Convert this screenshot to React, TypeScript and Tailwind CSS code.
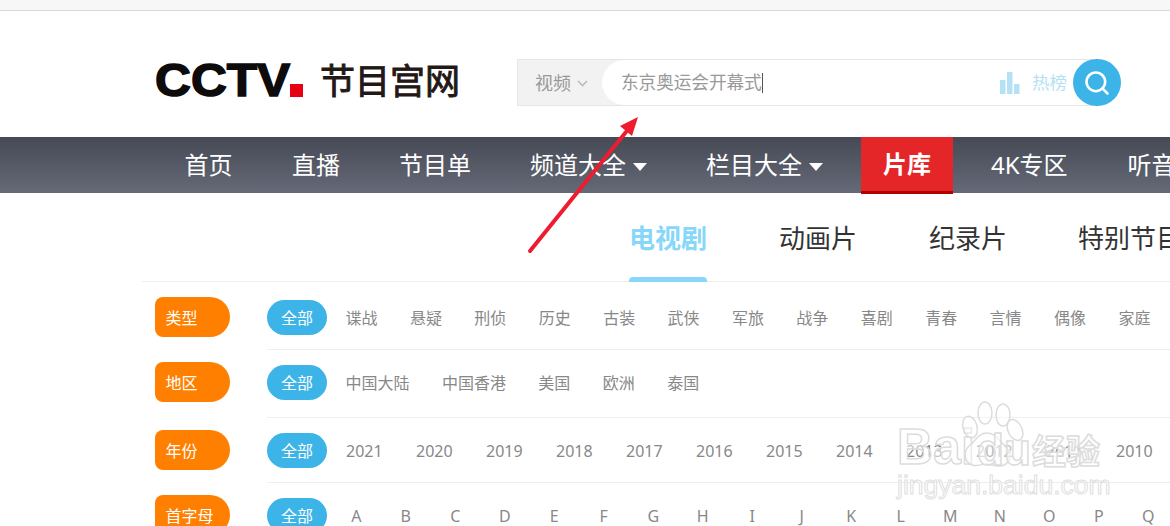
import { Search } from "lucide-react";

const navItems = [
  { name: "首页", className: "ml-[184.5px]" },
  { name: "直播", className: "ml-[59.5px]" },
  { name: "节目单", className: "ml-[59px]" },
  { name: "频道大全", className: "ml-[59px]", caret: true },
  { name: "栏目大全", className: "ml-[59px]", caret: true },
];

const rows = [
  { label: "类型", labelClass: "mt-[15px]", bodyClass: "h-[68px] pt-[18px]", listClass: "ml-[18.5px] gap-x-[32.4px]", items: ["谍战", "悬疑", "刑侦", "历史", "古装", "武侠", "军旅", "战争", "喜剧", "青春", "言情", "偶像", "家庭"] },
  { label: "地区", labelClass: "mt-[12px]", bodyClass: "h-[68px] pt-[15px]", listClass: "ml-[18.5px] gap-x-[32.4px]", items: ["中国大陆", "中国香港", "美国", "欧洲", "泰国"] },
  { label: "年份", labelClass: "mt-[12px]", bodyClass: "h-[65px] pt-[15px]", listClass: "ml-[19px] gap-x-[33.4px]", items: ["2021", "2020", "2019", "2018", "2017", "2016", "2015", "2014", "2013", "2012", "2011", "2010"] },
];

const letters = "ABCDEFGHIJKLMNOPQ".split("");

function Caret() {
  return <span className="ml-[7px] mt-[3px] h-0 w-0 border-x-[7px] border-t-[8px] border-x-transparent border-t-white" />;
}

function FilterLabel({ text, className }: { text: string; className: string }) {
  return (
    <div className={`h-10 w-[75px] shrink-0 rounded-l-lg rounded-r-[20px] bg-[#ff8000] pl-[10.5px] text-base leading-[42px] text-white ${className}`}>
      {text}
    </div>
  );
}

function AllPill() {
  return <div className="h-[35px] w-[60px] shrink-0 rounded-full bg-[#3cb4e7] text-center text-base leading-[37px] text-white">全部</div>;
}

export default function App() {
  return (
    <div className="relative h-[526px] w-[1170px] overflow-hidden bg-white font-['Noto_Sans','Noto_Sans_CJK_SC',sans-serif]">
      <div className="h-[11px] border-b border-[#d9d9d9] bg-[#f7f7f7]" />

      <header className="flex h-[126px] items-start pl-[155px] pt-[48px]">
        <div className="flex h-[47px] w-[362px] shrink-0 items-center pb-[5px]">
          <span className="inline-block w-[135px] origin-left scale-x-[1.08] font-['Liberation_Sans',sans-serif] text-[46px] font-bold leading-none text-[#0d0b0c] [-webkit-text-stroke:1.5px_#0d0b0c]">
            CCTV
          </span>
          <span className="mt-[20px] h-[13px] w-[13px] shrink-0 bg-[#e60012]" />
          <span className="ml-[17px] whitespace-nowrap text-[35px] leading-none text-[#231815] [-webkit-text-stroke:0.9px_#231815]">节目宫网</span>
        </div>

        <div className="flex h-[47px] w-[604px] items-center">
          <div className="flex h-[47px] w-[576px] shrink-0 border border-[#e6e6e6] bg-[#f2f2f2]">
            <div className="flex w-[84px] shrink-0 items-center pl-[17px] text-lg text-[#999]">
              视频
              <svg className="ml-[6px] mt-[2px]" width="11" height="7" viewBox="0 0 11 7">
                <path d="M1 1l4.5 4.5L10 1" fill="none" stroke="#bbb" strokeWidth="1.6" />
              </svg>
            </div>
            <div className="flex flex-1 items-center rounded-l-[24px] bg-white pl-[19px]">
              <span className="text-[17.7px] tracking-[-0.1px] text-[#999]">东京奥运会开幕式</span>
              <span className="h-[20px] w-px bg-[#555]" />
              <svg className="ml-auto" width="20" height="24" viewBox="0 0 20 24">
                <rect x="0" y="9" width="5.5" height="14" fill="#b5e1f6" />
                <rect x="7" y="1" width="5.5" height="22" fill="#b5e1f6" />
                <rect x="14" y="13" width="5.5" height="10" fill="#b5e1f6" />
              </svg>
              <span className="ml-[12px] mr-[25px] text-[17.5px] text-[#b5e1f6]">热榜</span>
            </div>
          </div>
          <div className="relative z-10 -ml-[20px] flex h-[47px] w-[48px] shrink-0 items-center justify-center rounded-full bg-[#3cb4e7]">
            <Search className="h-[28px] w-[28px] text-white" strokeWidth={2.2} />
          </div>
        </div>
      </header>

      <nav className="flex h-[56px] items-center whitespace-nowrap bg-gradient-to-b from-[#454a55] to-[#666a78] text-2xl text-white">
        {navItems.map((item) => (
          <span key={item.name} className={`flex items-center ${item.className}`}>
            {item.name}
            {item.caret && <Caret />}
          </span>
        ))}
        <span className="ml-[38px] h-[57px] w-[92px] shrink-0 self-start border-b-[3px] border-[#b00000] bg-[#e52629] text-center font-bold leading-[54px]">片库</span>
        <span className="ml-[38px]">4K专区</span>
        <span className="ml-[60px]">听音</span>
      </nav>

      <div className="ml-[142px] flex h-[89px] items-start whitespace-nowrap border-b border-[#eee] pl-[487px] pt-[25px] text-[26px] leading-[40px] text-[#333]">
        <div className="relative mr-[72px] w-[78px] text-center font-bold text-[#87d7fb]">
          电视剧
          <div className="absolute left-0 top-[59px] h-[5px] w-[78px] rounded-t-sm bg-[#87d7fb]" />
        </div>
        <span className="mr-[72px]">动画片</span>
        <span className="mr-[71px]">纪录片</span>
        <span>特别节目</span>
      </div>

      {rows.map((row) => (
        <div key={row.label} className="flex pl-[155px]">
          <FilterLabel text={row.label} className={row.labelClass} />
          <div className={`ml-[37px] flex flex-1 items-start whitespace-nowrap border-b border-[#eee] ${row.bodyClass}`}>
            <AllPill />
            <div className={`flex text-base leading-[37px] text-[#888] ${row.listClass}`}>
              {row.items.map((item) => (
                <span key={item}>{item}</span>
              ))}
            </div>
          </div>
        </div>
      ))}

      <div className="flex pl-[155px]">
        <FilterLabel text="首字母" className="mt-[12px]" />
        <div className="ml-[37px] flex flex-1 items-start pt-[15px]">
          <AllPill />
          <div className="ml-[4.5px] flex text-base leading-[37px] text-[#888]">
            {letters.map((letter) => (
              <span key={letter} className="w-[49.5px] shrink-0 text-center">{letter}</span>
            ))}
          </div>
        </div>
      </div>

      {/* annotation arrow */}
      <svg className="absolute left-[520px] top-[110px]" width="130" height="150" viewBox="0 0 130 150">
        <path d="M10 141 L106 22" stroke="#ed1c2e" strokeWidth="4" strokeLinecap="round" />
        <path d="M118 7 L100 16 L112 26 Z" fill="#ed1c2e" />
      </svg>

      {/* baidu watermark */}
      <div className="absolute left-[897px] top-[400px] h-[105px] w-[210px] font-['Liberation_Sans',sans-serif]">
        <div className="absolute left-0 top-[22px] text-[50px] font-bold leading-none text-white/50 [-webkit-text-stroke:1.5px_#dcdcdc]">Bai</div>
        <svg className="absolute left-[62px] top-0" width="70" height="72" viewBox="0 0 70 72">
          <g fill="rgba(255,255,255,0.4)" stroke="#dcdcdc" strokeWidth="1.5">
            <ellipse cx="26" cy="13" rx="7" ry="11" />
            <ellipse cx="44" cy="15" rx="7" ry="11" />
            <ellipse cx="11" cy="27" rx="7" ry="11" transform="rotate(-15 11 27)" />
            <ellipse cx="56" cy="30" rx="7" ry="11" transform="rotate(-25 56 30)" />
            <path d="M28 33c9 0 13 9 20 15 7 7 2 18-8 18-6 0-9-2-13-2-5 0-8 3-14 1-8-3-9-13-3-19 7-5 9-13 18-13z" />
          </g>
        </svg>
        <div className="absolute left-[80px] top-[28px] text-[44px] font-bold leading-none text-white/50 [-webkit-text-stroke:1.5px_#dcdcdc]">du</div>
        <div className="absolute left-[135px] top-[33px] font-['Noto_Sans_CJK_SC',sans-serif] text-[34px] font-bold leading-none text-white/70 [-webkit-text-stroke:1.5px_#dcdcdc]">经验</div>
        <div className="absolute left-0 top-[72px] whitespace-nowrap text-[26.5px] leading-none text-white/60 [-webkit-text-stroke:1px_#e0e0e0]">jingyan.baidu.com</div>
      </div>
    </div>
  );
}
